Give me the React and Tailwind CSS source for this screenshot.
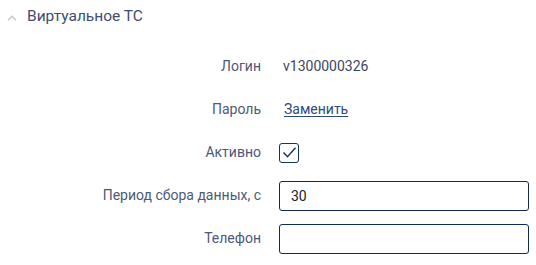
export default function App() {
    const labelCls = "text-right text-[14px] text-[#4f5876]"

    return (
        <div className="w-[536px] h-[265px] bg-white font-['Roboto',sans-serif] overflow-hidden">
            <div className="h-[34px] flex items-center pl-[7px]">
                <svg width="10" height="6" viewBox="0 0 10 6" className="mt-[1px]">
                    <path d="M1 5.2 L5 1.2 L9 5.2" fill="none" stroke="#c4c7cf" strokeWidth="1.4"/>
                </svg>
                <span className="ml-[10px] text-[15.5px] text-[#3e4b72]">Виртуальное ТС</span>
            </div>

            <div className="mt-[11px] grid grid-cols-[261px_250px] gap-x-[18px] auto-rows-[43px] items-center">
                <div className={labelCls}>Логин</div>
                <div className="pl-[4px] text-[14px] text-[#3d4663]">v1300000326</div>

                <div className={labelCls}>Пароль</div>
                <div className="pl-[5px] text-[14px]">
                    <a href="#" className="text-[#2f4a7c] underline underline-offset-2">Заменить</a>
                </div>

                <div className={labelCls}>Активно</div>
                <div>
                    <div className="w-[20px] h-[20px] border-[1.5px] border-[#14315f] rounded-[3px] flex items-center justify-center">
                        <svg width="15" height="13" viewBox="0 0 15 13">
                            <path d="M1.5 6.5 L5.5 10.8 L13.5 1.8" fill="none" stroke="#14315f" strokeWidth="1.4"/>
                        </svg>
                    </div>
                </div>

                <div className={labelCls}>Период сбора данных, с</div>
                <input
                    defaultValue="30"
                    className="h-[30px] w-[250px] border border-[#102b58] rounded-[3px] pl-[11px] text-[14px] text-[#222] outline-none"
                />

                <div className={labelCls}>Телефон</div>
                <input
                    className="h-[30px] w-[250px] border border-[#102b58] rounded-[3px] pl-[11px] text-[14px] text-[#222] outline-none"
                />
            </div>
        </div>
    )
}
